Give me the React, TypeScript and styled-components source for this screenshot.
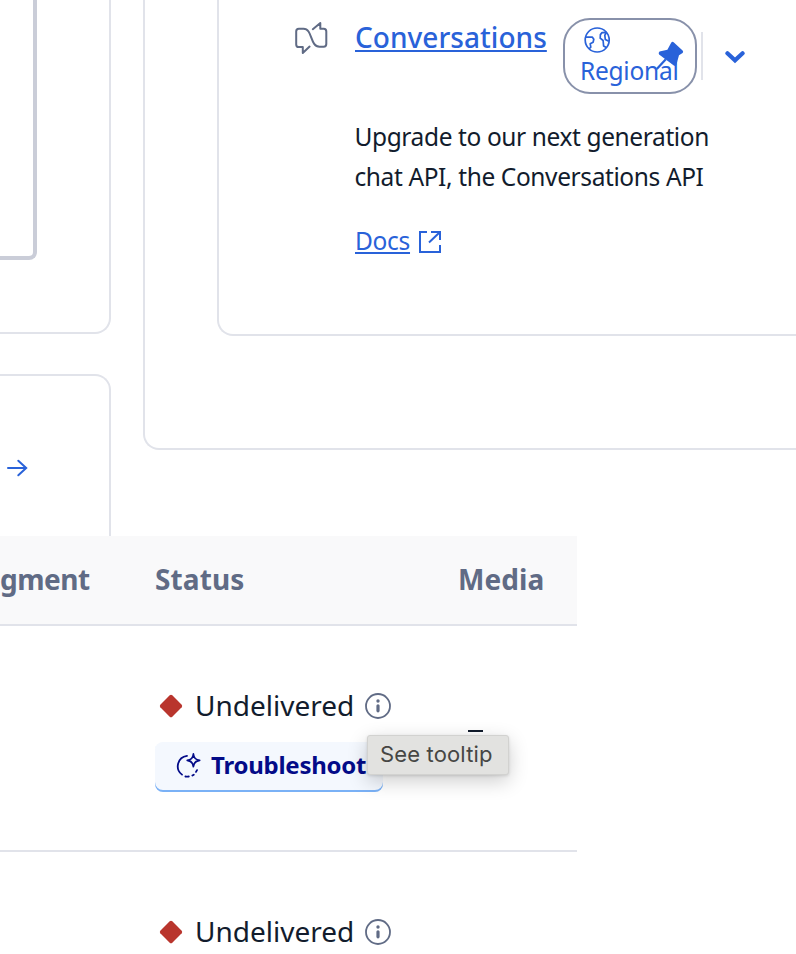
import React from 'react';
import styled, { createGlobalStyle, css } from 'styled-components';

const color = {
  line: '#e1e3ea',
  strongLine: '#cacdd8',
  weak: '#606b85',
  text: '#121c2d',
  link: '#2962d9',
  badgeLine: '#8891aa',
  error: '#b9352d',
};

const GlobalStyle = createGlobalStyle`
  *, *::before, *::after { box-sizing: border-box; }
  html, body { margin: 0; background: #fff; }
  body {
    overflow: hidden;
    color: ${color.text};
    font-family: "Noto Sans", sans-serif;
  }
  svg { display: block; flex: none; }
`;

const Page = styled.main`
  width: 796px;
  height: 954px;
  overflow: hidden;
`;

const Overview = styled.section`
  display: grid;
  grid-template-columns: 111px 1fr;
  column-gap: 32px;
  height: 536px;
  overflow: hidden;
`;

const SideColumn = styled.div`
  display: grid;
  grid-template-rows: 334px 162px;
  row-gap: 40px;
`;

const SideCard = styled.div<{ $edge: 'top' | 'bottom' }>`
  border-right: 2px solid ${color.line};
  ${({ $edge }) =>
    $edge === 'bottom'
      ? css`
          border-bottom: 2px solid ${color.line};
          border-bottom-right-radius: 16px;
        `
      : css`
          border-top: 2px solid ${color.line};
          border-top-right-radius: 16px;
          padding: 80px 0 0 6px;
        `}
`;

const Preview = styled.div`
  width: 37px;
  height: 260px;
  border: solid ${color.strongLine};
  border-width: 0 4px 4px 0;
  border-bottom-right-radius: 8px;
`;

const ProductsPanel = styled.div`
  height: 450px;
  padding-left: 72px;
  border: solid ${color.line};
  border-width: 0 0 2px 2px;
  border-bottom-left-radius: 16px;
`;

const ProductCard = styled.article`
  display: grid;
  grid-template-columns: 60px 1fr;
  align-content: start;
  height: 336px;
  padding: 18px 0 0 76px;
  border: solid ${color.line};
  border-width: 0 0 2px 2px;
  border-bottom-left-radius: 16px;
`;

const ProductIcon = styled.div`
  padding-top: 3px;
`;

const ProductBody = styled.div`
  min-width: 0;
`;

const TitleRow = styled.div`
  display: flex;
  align-items: flex-start;
  height: 76px;
`;

const Link = styled.a<{ $title?: boolean }>`
  color: ${color.link};
  text-decoration: underline;
  text-decoration-thickness: 2px;
  text-decoration-skip-ink: none;
  text-underline-offset: 2px;
  white-space: nowrap;
  ${({ $title }) =>
    $title
      ? css`
          width: 208px;
          font-size: 28px;
          font-weight: 500;
          line-height: 38px;
          letter-spacing: 0.04px;
        `
      : css`
          width: 55px;
          font-size: 24.5px;
          line-height: 40px;
          letter-spacing: -0.3px;
        `}
`;

const Badge = styled.span`
  position: relative;
  display: flex;
  flex-direction: column;
  width: 134px;
  height: 76px;
  padding: 7px 0 0 15px;
  border: 2px solid ${color.badgeLine};
  border-radius: 27px;
  color: ${color.link};
  font-size: 24.5px;
  line-height: 34px;
`;

const BadgeLabel = styled.span`
  letter-spacing: -0.25px;
`;

const BadgeGlobe = styled.span`
  height: 27px;
  padding-left: 4px;
`;

const Pin = styled.span`
  position: absolute;
  top: 21px;
  right: 11px;
`;

const Divider = styled.span`
  width: 2px;
  height: 48px;
  margin: 14px 22px 0 4px;
  background: ${color.line};
`;

const Toggle = styled.span`
  padding-top: 32px;
`;

const Description = styled.p`
  margin: 23px 0 0 -0.5px;
  font-size: 24.5px;
  line-height: 40px;
  letter-spacing: -0.39px;
  white-space: nowrap;
`;

const DocsRow = styled.div`
  display: flex;
  align-items: center;
  gap: 8px;
  margin-top: 24px;

  svg {
    margin-top: 2px;
  }
`;

const Table = styled.section`
  width: 577px;
`;

const Row = styled.div<{ $head?: boolean }>`
  display: grid;
  grid-template-columns: 155px 303px 1fr;
  border-bottom: 2px solid ${color.line};
  ${({ $head }) =>
    $head
      ? css`
          height: 90px;
          padding-bottom: 2px;
          align-items: center;
          background: #f9f9fa;
        `
      : css`
          height: 226px;
          padding-top: 60px;
        `}
`;

const Heading = styled.span<{ $clipped?: boolean }>`
  color: ${color.weak};
  font-size: 28px;
  font-weight: 700;
  line-height: 40px;
  letter-spacing: ${({ $clipped }) => ($clipped ? '-0.5px' : '0.1px')};
`;

const StatusCell = styled.div`
  display: flex;
  flex-direction: column;
  grid-column: 2;
`;

const Status = styled.div`
  display: flex;
  align-items: center;
  height: 40px;
  padding-left: 4px;
  font-size: 28px;
`;

const StatusLabel = styled.span`
  width: 170px;
  margin: 0 0 2px 12px;
  line-height: 38px;
`;

const Troubleshoot = styled.button`
  position: relative;
  display: flex;
  align-items: center;
  width: 228px;
  height: 50px;
  margin-top: 16px;
  padding: 0 0 4px 20px;
  gap: 8px;
  border: 0;
  border-radius: 8px;
  background: #f4f8fe;
  box-shadow: inset 0 -2px 0 #7ab1f6;
  color: #030b88;
  font: 700 24px/40px "Noto Sans", sans-serif;
  letter-spacing: -0.25px;
`;

const Tooltip = styled.span`
  position: absolute;
  top: -7px;
  left: 212px;
  width: 142px;
  height: 40px;
  padding-left: 12px;
  border: 1px solid #d2d2d0;
  border-radius: 3px;
  background: #e2e2e0;
  box-shadow: 0 6px 20px rgba(0, 0, 0, 0.2), 0 1px 3px rgba(0, 0, 0, 0.12);
  color: #464644;
  font: 400 22px/37px Inter, sans-serif;
  letter-spacing: 0.15px;
  text-align: left;
  white-space: nowrap;
`;

const MediaDash = styled.span`
  width: 15px;
  height: 2px;
  margin: 44px 0 0 10px;
  background: ${color.text};
`;

const ConversationsIcon = () => (
  <svg width="34" height="34" viewBox="0 0 34 34" fill="none" stroke={color.weak} strokeWidth="2" strokeLinecap="round" strokeLinejoin="round">
    <path d="M14.6 25.6 7.8 32V26H3.8Q1.2 26 1.2 23.4V10.4Q1.2 7.8 3.8 7.8H8.5C17.8 7.8 14.8 25.7 24.5 25.7H28.7Q31.3 25.7 31.3 23.1V10.4Q31.3 7.8 28.7 7.8H25.3V1.9L17.8 8.2" />
  </svg>
);

const GlobeIcon = () => (
  <svg width="27" height="27" viewBox="0 0 27 27" fill="none" stroke={color.link} strokeWidth="1.7" strokeLinejoin="round">
    <circle cx="13.2" cy="13" r="12" />
    <path d="M1.6 10.2H8.4L9.8 12.3 9.1 15.2 6.2 16.7 6.8 20.2 5 22M22.6 5.4 18 5.6 16.4 7.6 16.2 11.2 19.1 13.5 19.6 18.9 22.3 20.4M22.6 5.4 20.8 8.2 21.3 12.4 24.8 14.3" />
  </svg>
);

const PinIcon = () => (
  <svg width="28" height="32" viewBox="0 0 28 32">
    <path d="M15.3 1.4q1.3-1.1 2.6 0l8.7 8.2q1.1 1.2 0 2.5L23 14.2 20.3 24.1q-1 1.4-2.5.3L3.1 13.5Q2 11.9 3.5 10.4L11.4 8.7Z" fill={color.link} />
    <path d="m9.8 18.2-9 9.7" stroke={color.link} strokeWidth="2.2" />
  </svg>
);

const ChevronIcon = () => (
  <svg width="20" height="14" viewBox="0 0 20 14" fill="none" stroke={color.link} strokeWidth="4.2" strokeLinecap="round" strokeLinejoin="miter">
    <path d="m2.4 3.3 7.6 7 7.6-7" />
  </svg>
);

const ExternalIcon = () => (
  <svg width="24" height="24" viewBox="0 0 24 24" fill="none" stroke={color.link} strokeWidth="2">
    <path d="M9 2H2v20h20v-7M13 2h9v8M22 2 11 12.5" />
  </svg>
);

const ArrowIcon = () => (
  <svg width="22" height="24" viewBox="0 0 22 24" fill="none" stroke={color.link} strokeWidth="2" strokeLinecap="round">
    <path d="M2 12h18M12.3 4.7l7.9 7.3-7.9 7.3" />
  </svg>
);

const DiamondIcon = () => (
  <svg width="24" height="24" viewBox="0 0 24 24">
    <path d="M10.7 1.3q1.3-1 2.6 0l9.4 9.4q1 1.3 0 2.6l-9.4 9.4q-1.3 1-2.6 0l-9.4-9.4q-1-1.3 0-2.6Z" fill={color.error} />
  </svg>
);

const InfoIcon = () => (
  <svg width="26" height="26" viewBox="0 0 26 26" fill="none" stroke={color.weak}>
    <circle cx="13" cy="13" r="12" strokeWidth="1.8" />
    <path d="M13 12.8v5" strokeWidth="3.2" strokeLinecap="round" />
    <circle cx="13" cy="8" r="1.7" fill={color.weak} stroke="none" />
  </svg>
);

const AssistIcon = () => (
  <svg width="28" height="28" viewBox="0 0 28 28" fill="none" stroke="#030b88" strokeWidth="1.8" strokeLinecap="round" strokeLinejoin="round">
    <path d="M12 4.8A10.5 10.5 0 0 0 7 23.6M10.4 25.5q1.7.4 3.4 0M17.4 24.6l1.4-.9M21 20.9l1-1.8" />
    <path d="M18.4 2.8q.5 6 6.3 6.6-5.8.6-6.3 6.4-.6-5.8-6.2-6.4 5.6-.6 6.2-6.6Z" strokeWidth="1.6" />
  </svg>
);

const UndeliveredStatus = () => (
  <Status>
    <DiamondIcon />
    <StatusLabel>Undelivered</StatusLabel>
    <InfoIcon />
  </Status>
);

const ProductSummary = () => (
  <ProductCard>
    <ProductIcon>
      <ConversationsIcon />
    </ProductIcon>
    <ProductBody>
      <TitleRow>
        <Link $title>Conversations</Link>
        <Badge>
          <BadgeGlobe>
            <GlobeIcon />
          </BadgeGlobe>
          <BadgeLabel>Regional</BadgeLabel>
          <Pin>
            <PinIcon />
          </Pin>
        </Badge>
        <Divider />
        <Toggle>
          <ChevronIcon />
        </Toggle>
      </TitleRow>
      <Description>
        Upgrade to our next generation
        <br />
        chat API, the Conversations API
      </Description>
      <DocsRow>
        <Link>Docs</Link>
        <ExternalIcon />
      </DocsRow>
    </ProductBody>
  </ProductCard>
);

export default function App() {
  return (
    <Page>
      <GlobalStyle />
      <Overview>
        <SideColumn>
          <SideCard $edge="bottom">
            <Preview />
          </SideCard>
          <SideCard $edge="top">
            <ArrowIcon />
          </SideCard>
        </SideColumn>
        <ProductsPanel>
          <ProductSummary />
        </ProductsPanel>
      </Overview>
      <Table>
        <Row $head>
          <Heading $clipped>gment</Heading>
          <Heading>Status</Heading>
          <Heading>Media</Heading>
        </Row>
        <Row>
          <StatusCell>
            <UndeliveredStatus />
            <Troubleshoot>
              <AssistIcon />
              Troubleshoot
              <Tooltip>See tooltip</Tooltip>
            </Troubleshoot>
          </StatusCell>
          <MediaDash />
        </Row>
        <Row>
          <StatusCell>
            <UndeliveredStatus />
          </StatusCell>
        </Row>
      </Table>
    </Page>
  );
}
